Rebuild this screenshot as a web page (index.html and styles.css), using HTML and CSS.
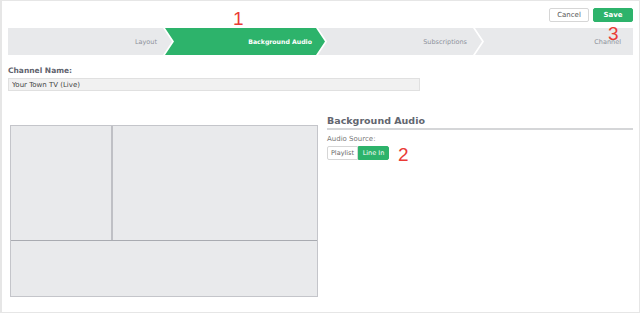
FILE: index.html
```html
<!DOCTYPE html>
<html lang="en">
  <head>
    <meta charset="UTF-8" />
    <meta name="viewport" content="width=device-width, initial-scale=1.0" />
    <title>Channel Setup</title>
    <link rel="stylesheet" href="styles.css">
  </head>
  <body>
    <div class="page">
      <div class="toolbar">
        <button type="button" class="btn btn-cancel">Cancel</button>
        <button type="button" class="btn btn-save">Save</button>
      </div>

      <div class="steps">
        <div class="step first">Layout</div>
        <div class="step active">Background Audio</div>
        <div class="step third">Subscriptions</div>
        <div class="step last">Channel</div>
      </div>

      <div class="field">
        <label for="channelName">Channel Name:</label>
        <input type="text" id="channelName" value="Your Town TV (Live)" />
      </div>

      <div class="content">
        <div class="preview">
          <div class="zone zone-left"></div>
          <div class="zone zone-main"></div>
          <div class="zone zone-bottom"></div>
        </div>

        <div class="panel">
          <h2>Background Audio</h2>
          <div class="panel-label">Audio Source:</div>
          <div class="toggle">
            <button type="button" class="toggle-btn">Playlist</button>
            <button type="button" class="toggle-btn on">Line In</button>
          </div>
        </div>
      </div>

      <!-- callout numbers -->
      <span class="callout callout-1">1</span>
      <span class="callout callout-2">2</span>
      <span class="callout callout-3">3</span>
    </div>
  </body>
</html>
```

FILE: styles.css
```css
body {
  margin: 0;
  background: #fff;
  font-family: "DejaVu Sans", Verdana, sans-serif;
  color: #555;
}

.page {
  position: relative;
  box-sizing: border-box;
  height: 313px;
  border: 1px solid #e6e6e6;
  border-left-width: 2px;
  padding: 7px 6px 0 6px;
}

.toolbar {
  display: flex;
  justify-content: flex-end;
  gap: 4px;
}

.btn {
  box-sizing: border-box;
  height: 14px;
  width: 40px;
  padding: 0;
  border-radius: 2px;
  font-family: inherit;
  font-size: 7px;
  cursor: pointer;
}

.btn-cancel {
  background: #fff;
  border: 1px solid #d6d6d6;
  color: #555;
}

.btn-save {
  background: #2db36b;
  border: 1px solid #2db36b;
  color: #fff;
  font-weight: bold;
}

.steps {
  display: flex;
  height: 27px;
  margin-top: 6px;
}

.step {
  flex: none;
  width: 164px;
  display: flex;
  align-items: center;
  justify-content: flex-end;
  box-sizing: border-box;
  padding-right: 15px;
  margin-left: -7px;
  background: #e8e9eb;
  color: #8e929b;
  font-size: 6.5px;
  clip-path: polygon(0 0, calc(100% - 9px) 0, 100% 50%, calc(100% - 9px) 100%, 0 100%, 9px 50%);
}

.step.first {
  margin-left: 0;
  clip-path: polygon(0 0, calc(100% - 9px) 0, 100% 50%, calc(100% - 9px) 100%, 0 100%);
}

.step.last {
  flex: 1;
  width: auto;
  padding-right: 12px;
  clip-path: polygon(0 0, 100% 0, 100% 100%, 0 100%, 9px 50%);
}

.step.active {
  width: 160px;
  padding-right: 13px;
  background: #2db36b;
  color: #fff;
  font-size: 6.2px;
  font-weight: bold;
}

.field {
  margin-top: 11px;
}

.field label {
  display: block;
  font-size: 7.5px;
  font-weight: bold;
  color: #5f636e;
  margin-bottom: 3px;
}

.field input {
  display: block;
  box-sizing: border-box;
  width: 412px;
  height: 13px;
  padding: 0 3px;
  border: 1px solid #e0e0e0;
  background: #f1f1f1;
  font-family: inherit;
  font-size: 7px;
  color: #444;
}

.content {
  display: flex;
  gap: 9px;
  margin-top: 24px;
}

.preview {
  box-sizing: border-box;
  width: 308px;
  height: 172px;
  margin-top: 10px;
  margin-left: 2px;
  border: 1px solid #c4c5ca;
  background: #e9eaec;
  display: grid;
  grid-template-columns: 102px 1fr;
  grid-template-rows: 114px 1fr;
}

.zone-left {
  border-right: 2px solid #bfc0c5;
}

.zone-bottom {
  grid-column: 1 / 3;
  border-top: 1px solid #a9abb1;
}

.panel {
  flex: 1;
}

.panel h2 {
  margin: 0;
  padding-bottom: 1px;
  border-bottom: 2px solid #d5d6d8;
  font-size: 9.5px;
  line-height: 12px;
  color: #62666f;
}

.panel-label {
  margin-top: 5px;
  font-size: 7px;
  color: #777;
}

.toggle {
  display: flex;
  margin-top: 3px;
}

.toggle-btn {
  box-sizing: border-box;
  height: 14px;
  width: 31px;
  padding: 0;
  border: 1px solid #d6d6d6;
  background: #fff;
  color: #666;
  font-family: inherit;
  font-size: 6.5px;
  border-radius: 2px 0 0 2px;
}

.toggle-btn.on {
  background: #2db36b;
  border-color: #2db36b;
  color: #fff;
  border-radius: 0 2px 2px 0;
}

.callout {
  position: absolute;
  font-family: "Liberation Sans", Arial, sans-serif;
  font-size: 19px;
  color: #ea3b35;
  line-height: 1;
}

.callout-1 {
  left: 231px;
  top: 8px;
}

.callout-2 {
  left: 396px;
  top: 144px;
}

.callout-3 {
  left: 606px;
  top: 23px;
}
```
